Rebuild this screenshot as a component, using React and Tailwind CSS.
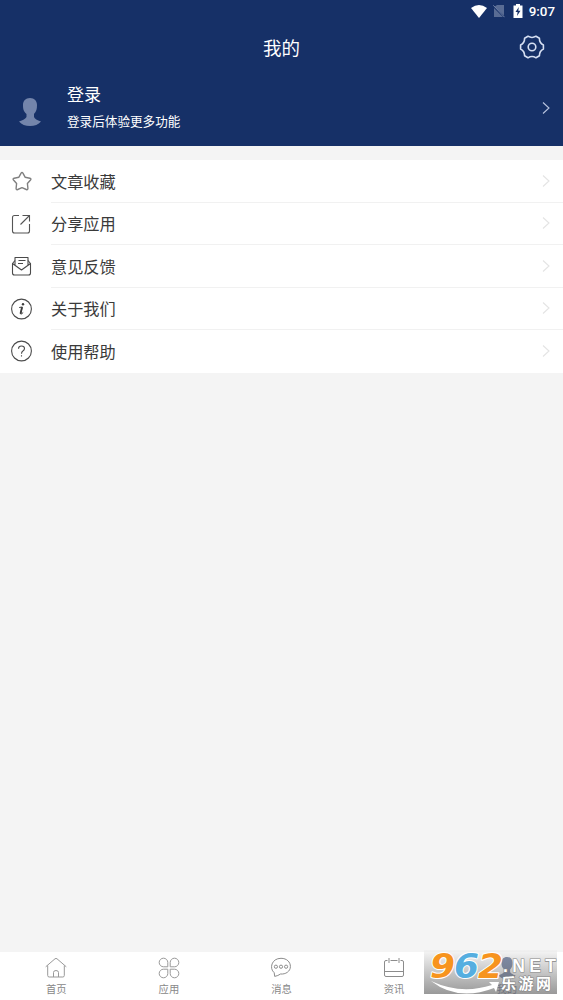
import React from "react";

const StarIcon = () => (
    <svg width="22" height="22" viewBox="0 0 22 22" fill="none" stroke="#808080" strokeWidth="1.4" strokeLinejoin="round">
        <path d="M10.1 3.1Q11 1.7 11.9 3.1L14.1 7.2L18.9 8.2Q20.6 8.7 19.5 10L16.4 13.5L16.9 18.3Q17 20.2 15.3 19.5L11 17.6L6.7 19.5Q5 20.2 5.1 18.3L5.6 13.5L2.5 10Q1.4 8.7 3.1 8.2L7.9 7.2Z" />
    </svg>
);

const ShareIcon = () => (
    <svg width="22" height="22" viewBox="0 0 22 22" fill="none" stroke="#555" strokeWidth="1.1">
        <path d="M8 2.5H3.5Q1.5 2.5 1.5 4.5V18Q1.5 20 3.5 20H16.5Q18.5 20 18.5 18V11" />
        <path d="M11.5 2.5H18.5V8.5M18.5 2.5L9.5 11.5" />
    </svg>
);

const MailIcon = () => (
    <svg width="22" height="22" viewBox="0 0 22 22" fill="none" stroke="#4a4a4a" strokeWidth="1.1" strokeLinejoin="round">
        <path d="M4 5.5L1.5 8.5V18Q1.5 20 3.5 20H17.5Q19.5 20 19.5 18V8.5L17 5.5" />
        <path d="M1.5 8.5L10.5 15L19.5 8.5M4 10V2.5H17V10M7.5 5.5H14.5M7 8.5H12" />
    </svg>
);

const InfoIcon = () => (
    <svg width="22" height="22" viewBox="0 0 22 22">
        <circle cx="10.5" cy="11" r="9.9" fill="none" stroke="#4a4a4a" strokeWidth="1.1" />
        <circle cx="12" cy="6.2" r="1.2" fill="#3c3c3c" />
        <path d="M8.2 9.5L11.3 9L9.6 15.9Q10 16.7 12.2 14.5" fill="none" stroke="#3c3c3c" strokeWidth="1" />
        <path d="M11 9.2L9.5 15.8" stroke="#3c3c3c" strokeWidth="1.8" />
    </svg>
);

const HelpIcon = () => (
    <svg width="22" height="22" viewBox="0 0 22 22" fill="none" stroke="#4a4a4a" strokeWidth="1.1">
        <circle cx="10.5" cy="11" r="9.9" />
        <path d="M7.5 8.8Q7.6 6 10.5 6Q13.5 6 13.5 8.6Q13.5 10.1 11.9 11Q10.5 11.8 10.5 13.7M10.5 15.2V16.6" />
    </svg>
);

const HomeIcon = () => (
    <svg width="22" height="22" viewBox="0 0 22 22" fill="none" stroke="#999" strokeWidth="1">
        <path d="M.7 9.8L10 1.8Q11 1 12 1.8L21.3 9.8M2.7 8.5V18.5Q2.7 20 4.2 20H17.8Q19.3 20 19.3 18.5V8.5" />
        <path d="M8.5 20V15.5Q8.5 13.5 11 13.5Q13.5 13.5 13.5 15.5V20" />
    </svg>
);

const AppsIcon = () => (
    <svg width="22" height="22" viewBox="0 0 22 22" fill="none" stroke="#999" strokeWidth="1">
        <path d="M9.8 9.8H5.5A4.3 4.3 0 1 1 9.8 5.5ZM12.2 9.8V5.5A4.3 4.3 0 1 1 16.5 9.8ZM9.8 12.2V16.5A4.3 4.3 0 1 1 5.5 12.2ZM12.2 12.2H16.5A4.3 4.3 0 1 1 12.2 16.5Z" />
    </svg>
);

const MessageIcon = () => (
    <svg width="22" height="22" viewBox="0 0 22 22" fill="none" stroke="#8c8c8c" strokeWidth="1">
        <path d="M4.2 15.7C-1 11.5 1.5 1.3 11 1.3C17 1.3 20.4 5.2 20.4 9.5C20.4 14.5 15.5 17.5 10.5 17Q8 18.8 4.7 19.4Z" />
        <circle cx="5.9" cy="9.7" r="1.6" />
        <circle cx="11" cy="9.7" r="1.6" />
        <circle cx="16.1" cy="9.7" r="1.6" />
    </svg>
);

const NewsIcon = () => (
    <svg width="22" height="22" viewBox="0 0 22 22" fill="none" stroke="#8c8c8c" strokeWidth="1">
        <path d="M4.5 3.5H3Q1.5 3.5 1.5 5V18Q1.5 19.5 3 19.5H19Q20.5 19.5 20.5 18V5Q20.5 3.5 19 3.5H17.5M7.5 3.5H14.5M1.5 14.5H20.5M6 1V6M16 1V6" />
    </svg>
);

const PersonIcon = ({ className }) => (
    <svg className={className} viewBox="0 0 24 28" fill="currentColor">
        <path d="M12 0C16.5 0 19 3 19 7C19 11 18.5 13.5 16 16V19Q17 21.5 23 23.5Q19 28 12 28Q5 28 1 23.5Q7 21.5 8.5 19V16C5.5 13.5 5 11 5 7C5 3 7.5 0 12 0Z" />
    </svg>
);

const Chevron = ({ className }) => (
    <svg className={className} width="8" height="14" viewBox="0 0 8 14" fill="none" stroke="currentColor" strokeWidth="1.1">
        <path d="M1 1.5L7 7L1 12.5" />
    </svg>
);

const menu = [
    { label: "文章收藏", icon: <StarIcon /> },
    { label: "分享应用", icon: <ShareIcon /> },
    { label: "意见反馈", icon: <MailIcon /> },
    { label: "关于我们", icon: <InfoIcon /> },
    { label: "使用帮助", icon: <HelpIcon /> },
];

const tabs = [
    { label: "首页", icon: <HomeIcon /> },
    { label: "应用", icon: <AppsIcon /> },
    { label: "消息", icon: <MessageIcon /> },
    { label: "资讯", icon: <NewsIcon /> },
    { label: "我的", icon: <PersonIcon className="h-[22px] w-[22px]" />, active: true },
];

function StatusBar() {
    return (
        <div className="flex h-[22px] items-center justify-end pr-2 text-white">
            <svg width="16" height="13" viewBox="0 0 16 13" fill="#fff">
                <path d="M0 3Q8-3 16 3L8 13Z" />
            </svg>
            <svg className="ml-[6px]" width="12" height="14" viewBox="0 0 12 14">
                <path d="M4 1H11V11.5L1.5 2.8ZM1 4L10 13H1Z" fill="#596c94" />
                <path d="M.3 1.3L11.5 13.2" stroke="#7485aa" strokeWidth="1" />
            </svg>
            <svg className="ml-2" width="10" height="14" viewBox="0 0 10 14">
                <path d="M3 0H7V1.5H9.5V14H.5V1.5H3Z" fill="#fff" />
                <path d="M5.8 3L2.5 8H4.6L4 12L7.5 6.8H5.3Z" fill="#163067" />
            </svg>
            <span className="mt-px ml-[6px] font-[Roboto] text-[13.4px] leading-[22px] font-medium">9:07</span>
        </div>
    );
}

function Watermark() {
    return (
        <div className="absolute top-[950px] left-[424px] h-[44px] w-[133px] bg-linear-to-b from-[#eeeeee]/50 to-[#808080]/80">
            <svg width="133" height="44" viewBox="0 0 133 44" className="overflow-visible">
                <g fontFamily="DejaVu Sans, sans-serif" fontWeight="bold" fontStyle="italic" fontSize="33" stroke="#fff" strokeWidth="2" strokeLinejoin="round" paintOrder="stroke">
                    <text x="6" y="28" fill="#f7941e" textLength="25" lengthAdjust="spacingAndGlyphs">9</text>
                    <text x="30" y="28" fill="#55aee0" textLength="25" lengthAdjust="spacingAndGlyphs">6</text>
                    <text x="54" y="28" fill="#f7941e" textLength="25" lengthAdjust="spacingAndGlyphs">2</text>
                </g>
                <path d="M7 31Q37 45 68 35L65 32L75 32L72 42L70 38Q34 52 7 31Z" fill="#fff" />
                <g fill="#fff" stroke="#888" strokeWidth="1.2" paintOrder="stroke" fontWeight="bold">
                    <text x="79" y="21.5" fontFamily="Liberation Sans, sans-serif" fontSize="17.5" textLength="53">.NET</text>
                    <text x="77" y="38.5" fontFamily="Noto Sans CJK SC, sans-serif" fontSize="15" textLength="50">乐游网</text>
                </g>
            </svg>
        </div>
    );
}

export default function App() {
    return (
        <div className="relative flex h-[1000px] w-[563px] flex-col overflow-hidden bg-[#f4f4f4] font-['Noto_Sans_CJK_SC',sans-serif]">
            <header className="h-[146px] shrink-0 bg-[#163067] text-white">
                <StatusBar />
                <div className="grid h-[50px] grid-cols-[1fr_auto_1fr] items-center">
                    <h1 className="col-start-2 text-[18.5px] leading-[26px]">我的</h1>
                    <svg className="mr-[18px] justify-self-end" width="26" height="24" viewBox="0 0 26 24" fill="none" stroke="#d6dff2" strokeWidth="1.6" strokeLinejoin="round">
                        <path d="M24.4 10V14Q20.3 16.2 20.4 20.8L17 22.8Q13 20.2 9 22.8L5.6 20.8Q5.7 16.2 1.6 14V10Q5.7 7.8 5.6 3.2L9 1.2Q13 3.8 17 1.2L20.4 3.2Q20.3 7.8 24.4 10Z" />
                        <circle cx="13" cy="12" r="3.8" />
                    </svg>
                </div>
                <div className="flex h-[74px] items-center pr-[13px] pl-[18px]">
                    <PersonIcon className="mt-[5px] h-[28px] w-[24px] text-[#7485ab]" />
                    <div className="mb-[7px] ml-[25px] flex-1">
                        <div className="text-[17px] leading-6">登录</div>
                        <div className="mt-[6px] text-[12.6px] leading-[18px]">登录后体验更多功能</div>
                    </div>
                    <Chevron className="mb-[2px] text-[#b8c4df]" />
                </div>
            </header>

            <main className="mt-[14px] bg-white">
                {menu.map((item, i) => (
                    <div key={item.label} className="flex h-[42.5px] items-center pl-[11px]">
                        {item.icon}
                        <div className={`ml-[18px] flex h-full flex-1 items-center justify-between pr-[13px] ${i < menu.length - 1 ? "border-b border-[#f1f1f1]" : ""}`}>
                            <span className="text-[16.2px] leading-6 text-[#3a3a3a]">{item.label}</span>
                            <Chevron className="text-[#e4e4e4]" />
                        </div>
                    </div>
                ))}
            </main>

            <nav className="mt-auto grid h-[48px] grid-cols-5 bg-white">
                {tabs.map((tab) => (
                    <div key={tab.label} className={`flex flex-col items-center pt-[5px] ${tab.active ? "text-[#163067]" : "text-[#888]"}`}>
                        {tab.icon}
                        <span className="mt-[2px] text-[10.3px] leading-[15px]">{tab.label}</span>
                    </div>
                ))}
            </nav>

            <Watermark />
        </div>
    );
}
